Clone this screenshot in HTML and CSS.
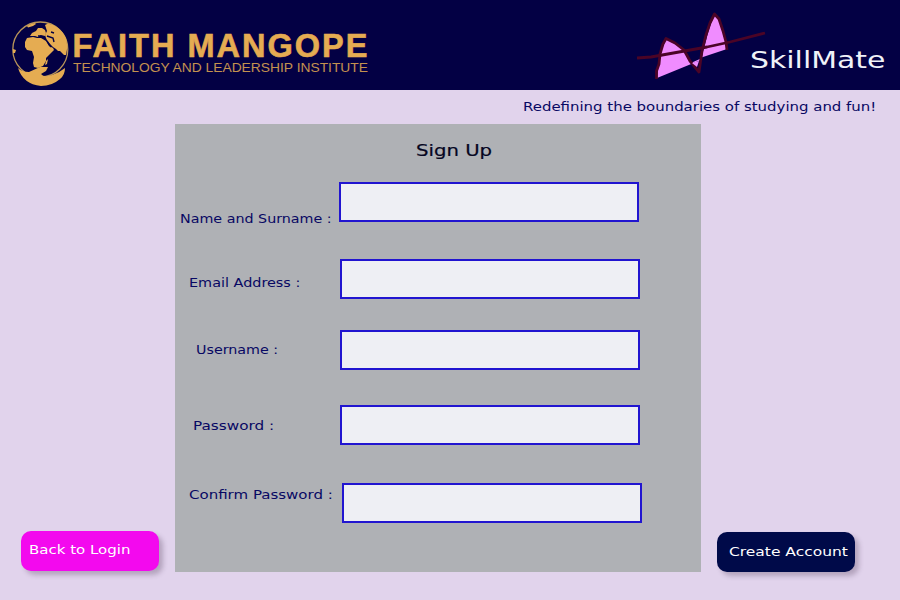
FILE: index.html
```html
<!DOCTYPE html>
<html lang="en">
<head>
<meta charset="utf-8">
<title>SkillMate - Sign Up</title>
<link rel="stylesheet" href="styles.css">
</head>
<body>
<header class="header">
  <svg class="institute" width="370" height="80" viewBox="0 0 370 80" role="img">
    <circle class="globe-ring" cx="40.300" cy="49.500" r="27.500"/>
    <g class="gold">
      <path d="M27 26Q31 23.500 35 23L36 24 33 26 28 27.500Z"/>
      <path d="M13 49L16 50 15 53 13 53Z"/>
      <path d="M27 38L33 37 37 38 41 38 46 41 49 46 53 48 54 50 50 54 46 58 46 61 43 66 38 68 34 67 33 63 34 57 32 51 27 50 25 47 25 42Z"/>
      <path d="M30 36L32 33 36 31 38 28 42 28 45 30 46 33 45 36 41 35 38 37 35 36Z"/>
      <path d="M45 25L48 23.500Q60 26 65.500 37Q68.500 45 66 55L64 55 60 51 58 51 56 49 53 47 51 45 48 42 46 38 45 35 47 31Z"/>
      <path d="M46 61L48 59 47 64 45 65Z"/>
      <path d="M18 68Q22 72 29 72L40 67 48 67 46 71 41 74Q44 78 52 75Q59 73 65 68Q65 75 60 79Q52 86 41 86Q23 84 18 68Z"/>
    </g>
    <path class="sea" d="M47 36L53 38 54 42M47 41L51 47M38 36L41 36M51 32L54 33"/>
    <text class="gold institute-name" x="72.500" y="57" textLength="295" lengthAdjust="spacing">FAITH MANGOPE</text>
    <text class="gold institute-sub" x="73" y="72" textLength="295" lengthAdjust="spacingAndGlyphs">TECHNOLOGY AND LEADERSHIP INSTITUTE</text>
  </svg>
  <div class="brand">
    <svg class="brand-mark" width="140" height="84" viewBox="630 0 140 84" aria-hidden="true">
      <path class="mark-fill" d="M657 78L659 62 662 49 666 39 674 43 684 50 691 61 727 49 724 34 720 21 714 14 708 33 703 52 701 60Z"/>
      <path class="mark-gap" d="M685 50L703 46 702 58 691 63Z"/>
      <path class="mark-line" d="M656.500 79L656.500 71 659 64 660 54 663 44 666 38.500 675 43 684 50 690 61 699 72 702 51 706 35 710 23 714.500 14 719 19 723 31 726 42 727 50"/>
      <path class="mark-fill" d="M692 63L699 61 697 67Z"/>
      <path class="mark-axis" d="M637 58L651 57 707 47 730 42 765 33"/>
    </svg>
    <span class="wide brand-name">SkillMate</span>
  </div>
</header>
<p class="tagline"><span class="wide">Redefining the boundaries of studying and fun!</span></p>
<form class="signup">
  <div class="side"><button type="button" class="button back"><span class="wide">Back to Login</span></button></div>
  <section class="panel">
    <h1 class="title"><span class="wide">Sign Up</span></h1>
    <div class="field name"><label class="wide" for="name">Name and Surname :</label><input id="name" type="text"></div>
    <div class="field email"><label class="wide" for="email">Email Address :</label><input id="email" type="email"></div>
    <div class="field username"><label class="wide" for="username">Username :</label><input id="username" type="text"></div>
    <div class="field password"><label class="wide" for="password">Password :</label><input id="password" type="password"></div>
    <div class="field confirm"><label class="wide" for="confirm">Confirm Password :</label><input id="confirm" type="password"></div>
  </section>
  <div class="side"><button type="button" class="button create"><span class="wide">Create Account</span></button></div>
</form>
</body>
</html>
```
FILE: styles.css
```css
* { box-sizing: border-box; }
body {
  margin: 0;
  width: 900px;
  height: 600px;
  overflow: hidden;
  background: #e1d3ec;
  color: #080863;
  font: 12px/16px "DejaVu Sans", sans-serif;
}
.wide {
  display: inline-block;
  white-space: nowrap;
  transform: scaleX(var(--stretch, 1.25));
  transform-origin: left center;
}
.header {
  height: 90px;
  display: flex;
  justify-content: space-between;
  background: #030044;
}
.institute { overflow: visible; }
.gold { fill: #e5ac52; }
.globe-ring { fill: none; stroke: #b99459; stroke-width: 1.3; }
.sea { fill: none; stroke: #030044; stroke-width: 1.4; }
.institute-name { font: bold 32.5px "Liberation Sans", sans-serif; stroke: #e5ac52; stroke-width: .6px; }
.institute-sub { font: 13.5px "Liberation Sans", sans-serif; opacity: .85; }
.brand { display: flex; width: 270px; }
.brand-mark { flex: none; }
.mark-fill { fill: #f08cff; }
.mark-gap { fill: #030044; }
.mark-line, .mark-axis { fill: none; stroke: #4b0426; stroke-width: 2.8; stroke-linejoin: round; }
.brand-name {
  --stretch: 1.3;
  margin: 44px 0 0 -20px;
  height: 30px;
  font-size: 23px;
  line-height: 32px;
  color: #f0f2f8;
}
.tagline { --stretch: 1.245; margin: 0; height: 34px; padding: 9px 0 0 523px; }
.signup { display: grid; grid-template-columns: 175px 526px 199px; height: 448px; }
.panel { background: #afb1b5; }
.title {
  --stretch: 1.23;
  margin: 0;
  height: 58px;
  padding: 17px 0 0 241px;
  font-size: 16px;
  line-height: 20px;
  font-weight: normal;
  color: #05051f;
  -webkit-text-stroke: .2px;
}
.field { display: grid; grid-template-columns: 165px 300px; height: 40px; align-items: start; }
.field label { justify-self: start; }
.field input { width: 300px; height: 40px; border: 2px solid #2115d0; background: #eeeff4; padding: 0 8px; outline: 0; }
.name { --stretch: 1.19; grid-template-columns: 164px 300px; margin-bottom: 37px; }
.name label { margin: 29px 0 -5px 5px; }
.email { --stretch: 1.2; margin-bottom: 31px; }
.email label { margin: 16px 0 0 14px; }
.username { --stretch: 1.19; margin-bottom: 35px; }
.username label { margin: 12px 0 0 21px; }
.password { --stretch: 1.27; margin-bottom: 38px; }
.password label { margin: 13px 0 0 18px; }
.confirm { --stretch: 1.25; grid-template-columns: 167px 300px; }
.confirm label { margin: 4px 0 0 14px; }
.side { display: flex; align-items: flex-end; }
.button {
  width: 138px;
  height: 40px;
  border: 0;
  border-radius: 10px;
  padding: 0 0 3px;
  font: inherit;
  text-align: left;
  color: #fff;
  box-shadow: 4px 4px 5px rgba(60, 40, 70, .28);
}
.back { --stretch: 1.25; margin: 0 0 1px 21px; padding-left: 8px; background: #f309ee; }
.create { --stretch: 1.29; margin-left: 16px; padding: 0 0 1px 12px; background: #000a49; }
```
